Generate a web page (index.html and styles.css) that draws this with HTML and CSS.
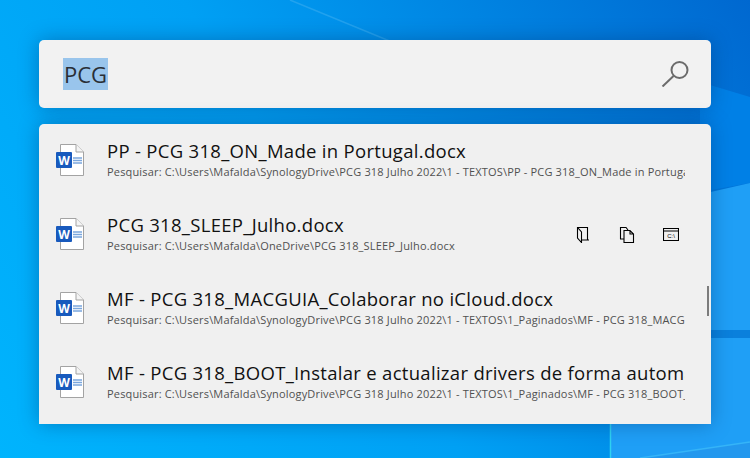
FILE: index.html
```html
<!DOCTYPE html>
<html lang="pt">
<head>
    <meta charset="UTF-8">
    <meta name="viewport" content="width=device-width, initial-scale=1.0">
    <title>PowerToys Run</title>
    <link rel="stylesheet" href="styles.css">
</head>
<body>
    <!-- papel de parede -->
    <svg class="wallpaper" width="750" height="458" viewBox="0 0 750 458">
        <defs>
            <linearGradient id="wall" gradientUnits="userSpaceOnUse" x1="0" y1="458" x2="750" y2="0">
                <stop offset="0" stop-color="#00b4fd"/>
                <stop offset="0.45" stop-color="#00a0f4"/>
                <stop offset="1" stop-color="#0068d0"/>
            </linearGradient>
        </defs>
        <rect width="750" height="458" fill="url(#wall)"/>
        <path d="M290 0L392 42" stroke="#2fa8f0" stroke-opacity="0.7" stroke-width="1.500"/>
        <path d="M700 82L750 97V183L700 192Z" fill="#0080e6"/>
        <path d="M610 215L750 183V458H610Z" fill="#1f9ff6"/>
        <path d="M700 330H750V338H700Z" fill="#0a80dc"/>
        <path d="M640 458L750 442V458Z" fill="#2398ee"/>
        <path d="M640 458L750 442" stroke="#35b4f8" stroke-width="1.500"/>
        <path d="M610.500 420V458" stroke="#2fd2f2" stroke-width="1.500"/>
    </svg>

    <svg width="0" height="0" class="defs">
        <symbol id="word" viewBox="0 0 28 32">
            <path d="M4.500 .5H20L27.500 8V31.500H4.500Z" fill="#fff" stroke="#a3a3a3"/>
            <path d="M20 .5V8H27.500" fill="#f4f4f4" stroke="#a3a3a3"/>
            <path d="M17 14H26M17 16.500H26M17 19H26" stroke="#7ba7dd" stroke-width="1.500"/>
            <rect x="0" y="8" width="16" height="16" rx="1" fill="#185abd"/>
        </symbol>
    </svg>

    <div class="launcher">
        <div class="search">
            <span class="search_text">PCG</span>
            <svg class="search_icon" width="28" height="28" viewBox="0 0 28 28" fill="none" stroke="#6b6b6b" stroke-width="2">
                <circle cx="18.500" cy="11" r="8"/>
                <path d="M12.500 17L1.500 27.500"/>
            </svg>
        </div>

        <div class="results">
            <div class="row">
                <svg class="file_icon" width="28" height="32"><use href="#word"/><text x="8" y="21" class="word_letter" text-anchor="middle">W</text></svg>
                <div class="row_text">
                    <div class="row_title">PP - PCG 318_ON_Made in Portugal.docx</div>
                    <div class="row_sub">Pesquisar: C:\Users\Mafalda\SynologyDrive\PCG 318 Julho 2022\1 - TEXTOS\PP - PCG 318_ON_Made in Portugal.docx</div>
                </div>
            </div>

            <div class="row">
                <svg class="file_icon" width="28" height="32"><use href="#word"/><text x="8" y="21" class="word_letter" text-anchor="middle">W</text></svg>
                <div class="row_text row_text_short">
                    <div class="row_title">PCG 318_SLEEP_Julho.docx</div>
                    <div class="row_sub">Pesquisar: C:\Users\Mafalda\OneDrive\PCG 318_SLEEP_Julho.docx</div>
                </div>
                <div class="actions">
                    <svg width="16" height="16" viewBox="0 0 16 16" fill="none" stroke="#000" stroke-width="1.100">
                        <path d="M2.500 .5H12.500V13H7M2.500 .5V11L6.500 15.500V5ZM12.500 13H14"/>
                    </svg>
                    <svg width="16" height="16" viewBox="0 0 16 16" fill="none" stroke="#000" stroke-width="1.100">
                        <path d="M5 12H1.500V.5H7L9 3M5 3.500H11L14.500 7V15.500H5ZM11 3.500V7H14.500"/>
                    </svg>
                    <svg width="16" height="14" viewBox="0 0 16 14" fill="none" stroke="#000" stroke-width="1.100">
                        <path d="M.5 .5H15.500V12.500H.5ZM.5 3H15.500"/>
                        <text x="8" y="10" class="cmd_letter" text-anchor="middle">C:\</text>
                    </svg>
                </div>
            </div>

            <div class="row">
                <svg class="file_icon" width="28" height="32"><use href="#word"/><text x="8" y="21" class="word_letter" text-anchor="middle">W</text></svg>
                <div class="row_text">
                    <div class="row_title">MF - PCG 318_MACGUIA_Colaborar no iCloud.docx</div>
                    <div class="row_sub">Pesquisar: C:\Users\Mafalda\SynologyDrive\PCG 318 Julho 2022\1 - TEXTOS\1_Paginados\MF - PCG 318_MACGUIA_Colaborar no iCloud.docx</div>
                </div>
            </div>

            <div class="row">
                <svg class="file_icon" width="28" height="32"><use href="#word"/><text x="8" y="21" class="word_letter" text-anchor="middle">W</text></svg>
                <div class="row_text">
                    <div class="row_title">MF - PCG 318_BOOT_Instalar e actualizar drivers de forma automática.docx</div>
                    <div class="row_sub">Pesquisar: C:\Users\Mafalda\SynologyDrive\PCG 318 Julho 2022\1 - TEXTOS\1_Paginados\MF - PCG 318_BOOT_Instalar e actualizar drivers.docx</div>
                </div>
            </div>

            <div class="scrollbar"></div>
        </div>
    </div>
</body>
</html>
```

FILE: styles.css
```css
html, body {
    margin: 0;
    height: 100%;
}

body {
    overflow: hidden;
    font-family: "Open Sans", "Noto Sans", sans-serif;
    background-color: #0090ea;
}

.wallpaper {
    position: absolute;
    top: 0;
    left: 0;
}

.defs {
    position: absolute;
}

.word_letter {
    font-family: "Open Sans", sans-serif;
    font-size: 12px;
    font-weight: 700;
    fill: #fff;
}

.cmd_letter {
    font-family: "Liberation Sans", sans-serif;
    font-size: 6px;
    fill: #000;
    stroke: none;
}

.launcher {
    position: relative;
    width: 672px;
    padding: 40px 0 0 39px;
    display: flex;
    flex-direction: column;
    gap: 16px;
}

.search {
    height: 68px;
    padding: 0 22px 0 24px;
    display: flex;
    align-items: center;
    justify-content: space-between;
    background-color: #f2f2f2;
    border-radius: 5px;
    box-shadow: 0 0 20px rgba(0, 50, 110, 0.4);
}

.search_text {
    padding: 0 1px;
    font-size: 22px;
    line-height: 32px;
    color: #2a2f36;
    background-color: #99c5ec;
}

.search_icon {
    display: block;
    margin-top: -2px;
}

.results {
    position: relative;
    height: 300px;
    overflow: hidden;
    background-color: #f0f0f0;
    border-radius: 5px 5px 0 0;
    box-shadow: 0 0 20px rgba(0, 50, 110, 0.4);
}

.row {
    height: 74px;
    padding-left: 17px;
    display: flex;
    align-items: center;
}

.file_icon {
    flex: none;
    margin-top: -2px;
    margin-right: 23px;
}

.row_text {
    width: 578px;
    margin-top: -4px;
    overflow: hidden;
    white-space: nowrap;
}

.row_text_short {
    width: 440px;
}

.row_title {
    font-size: 18.500px;
    line-height: 24px;
    letter-spacing: 0.3px;
    color: #111;
}

.row_sub {
    margin-top: 1px;
    font-size: 11px;
    line-height: 16px;
    letter-spacing: 0.17px;
    color: #505050;
}

.actions {
    margin-left: 28px;
    display: flex;
    align-items: center;
    gap: 28px;
}

.scrollbar {
    position: absolute;
    top: 162px;
    right: 2px;
    width: 2px;
    height: 30px;
    background-color: #7c7c7c;
}
```
